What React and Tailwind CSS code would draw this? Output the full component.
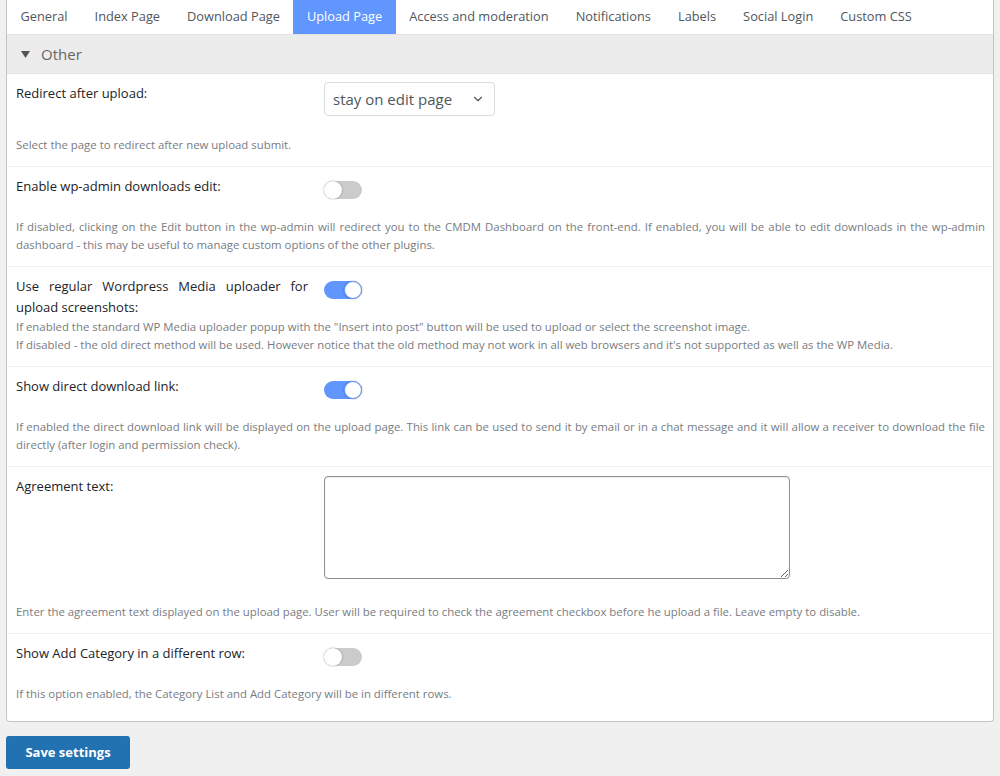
import { ChevronDown } from "lucide-react";

const tabs = [
  "General",
  "Index Page",
  "Download Page",
  "Upload Page",
  "Access and moderation",
  "Notifications",
  "Labels",
  "Social Login",
  "Custom CSS",
];

const Toggle = ({ on }) => (
  <div
    className={`mt-[5px] relative w-[38px] h-[18px] rounded-full ${
      on ? "bg-[#6196ff]" : "bg-[#cbcbcb]"
    }`}
  >
    <div
      className={`absolute top-0 w-[18px] h-[18px] rounded-full bg-white shadow-[0_0_2px_rgba(0,0,0,0.35)] ${
        on ? "right-0 border border-[#6196ff]" : "left-0"
      }`}
    ></div>
  </div>
);

const Row = ({ label, control, children, last }) => (
  <div
    className={`pt-[9px] pl-[9px] pr-[8px] ${
      last ? "pb-[18px]" : "pb-[12px] border-b border-[#f0f0f0]"
    }`}
  >
    <div className="grid grid-cols-[292px_1fr] gap-x-[16px] min-h-[42px] items-start">
      <div className="text-[13px] leading-[20.5px] text-[#1d2327] text-justify">
        {label}
      </div>
      <div>{control}</div>
    </div>
    <div className="text-[11.4px] leading-[18px] text-[#787c82] text-justify">
      {children}
    </div>
  </div>
);

export default function App() {
  return (
    <div
      className="min-h-screen bg-[#f0f0f1] pb-[9px]"
      style={{ fontFamily: "'Open Sans', 'Noto Sans', sans-serif" }}
    >
      <div className="mx-[6px] bg-white border-x border-b border-[#c3c4c7] rounded-b-[4px]">
        {/* Tabs */}
        <div className="flex h-[34px]">
          {tabs.map((t) => (
            <div
              key={t}
              className={`px-[13.5px] leading-[33px] text-[12.8px] ${
                t === "Upload Page"
                  ? "bg-[#6196ff] text-white"
                  : "text-[#50575e]"
              }`}
            >
              {t}
            </div>
          ))}
        </div>

        {/* Section header */}
        <div className="flex items-center h-[40px] bg-[#ececec] border-t border-[#e4e4e4] border-b border-[#cccccc] pl-[14px]">
          <svg width="9" height="8" viewBox="0 0 9 8" className="mr-[11px] mt-[1px]">
            <polygon points="0,0 9,0 4.5,7" fill="#555" />
          </svg>
          <span className="text-[15px] text-[#666]">Other</span>
        </div>

        <Row
          label="Redirect after upload:"
          control={
            <div className="-mt-[1px] mb-[20px] w-[171px] h-[34px] border border-[#dcdcde] rounded-[4px] flex items-center justify-between pl-[8px] pr-[9px] text-[15px] text-[#50575e]">
              <span>stay on edit page</span>
              <ChevronDown size={14} strokeWidth={2} className="text-[#50575e]" />
            </div>
          }
        >
          Select the page to redirect after new upload submit.
        </Row>

        <Row label="Enable wp-admin downloads edit:" control={<Toggle on={false} />}>
          If disabled, clicking on the Edit button in the wp-admin will redirect
          you to the CMDM Dashboard on the front-end. If enabled, you will be
          able to edit downloads in the wp-admin dashboard - this may be useful
          to manage custom options of the other plugins.
        </Row>

        <Row
          label="Use regular Wordpress Media uploader for upload screenshots:"
          control={<Toggle on />}
        >
          <div className="text-left">
            If enabled the standard WP Media uploader popup with the "Insert
            into post" button will be used to upload or select the screenshot
            image.
            <br />
            If disabled - the old direct method will be used. However notice
            that the old method may not work in all web browsers and it's not
            supported as well as the WP Media.
          </div>
        </Row>

        <Row label="Show direct download link:" control={<Toggle on />}>
          If enabled the direct download link will be displayed on the upload
          page. This link can be used to send it by email or in a chat message
          and it will allow a receiver to download the file directly (after
          login and permission check).
        </Row>

        <Row
          label="Agreement text:"
          control={
            <textarea
              readOnly
              className="block mb-[24px] w-[466px] h-[103px] border border-[#8c8f94] rounded-[4px] bg-white shadow-[inset_0_1px_2px_rgba(0,0,0,0.07)]"
            />
          }
        >
          Enter the agreement text displayed on the upload page. User will be
          required to check the agreement checkbox before he upload a file.
          Leave empty to disable.
        </Row>

        <Row
          label="Show Add Category in a different row:"
          control={<Toggle on={false} />}
          last
        >
          If this option enabled, the Category List and Add Category will be in
          different rows.
        </Row>
      </div>

      <button className="ml-[6px] mt-[14px] w-[124px] h-[33px] bg-[#2271b1] text-white text-[13px] font-bold rounded-[3px]">
        Save settings
      </button>
    </div>
  );
}
